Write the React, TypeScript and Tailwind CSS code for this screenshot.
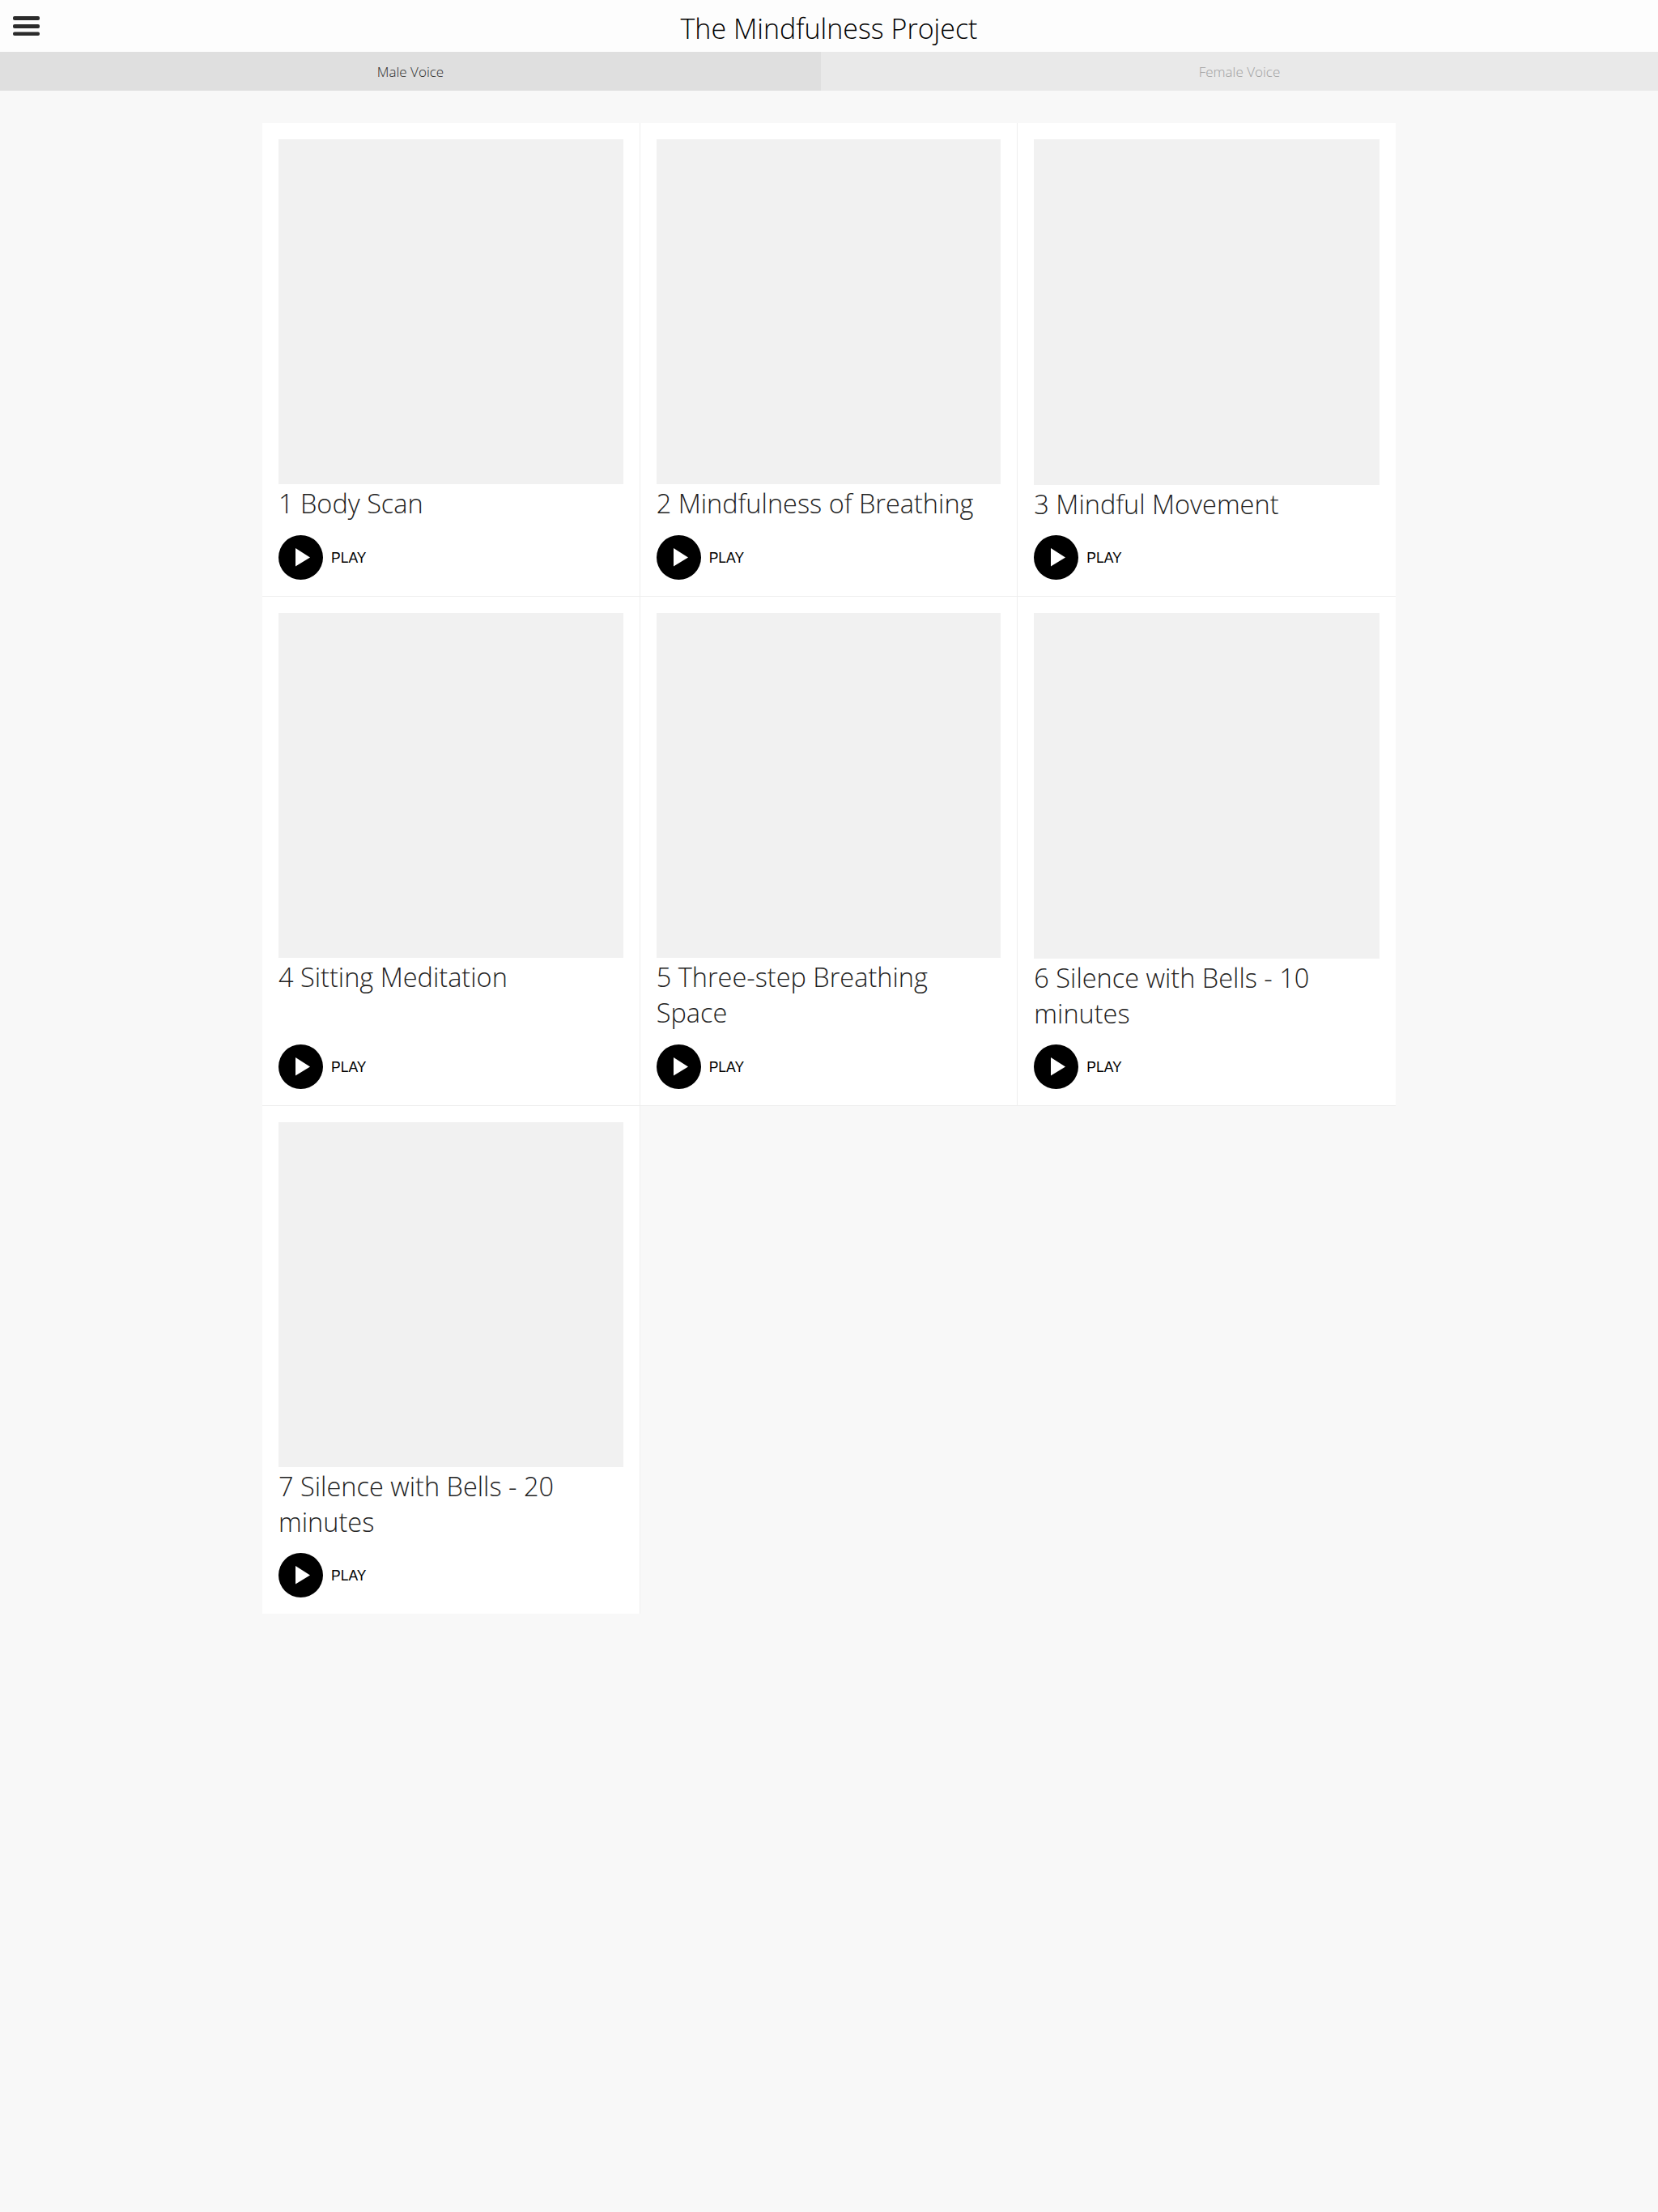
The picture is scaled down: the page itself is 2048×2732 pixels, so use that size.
const tracks = [
  "1 Body Scan",
  "2 Mindfulness of Breathing",
  "3 Mindful Movement",
  "4 Sitting Meditation",
  "5 Three-step Breathing Space",
  "6 Silence with Bells - 10 minutes",
  "7 Silence with Bells - 20 minutes",
];

const App = () => {
  return (
    <div className="min-h-screen bg-[#f8f8f8] font-['Open_Sans',sans-serif]">
      {/* Top bar */}
      <header className="h-16 bg-[#fdfdfd] grid grid-cols-[1fr_auto_1fr] items-center">
        <button className="w-[33px] h-6 ml-[16px]">
          <svg viewBox="0 0 33 24" className="w-[33px] h-6 text-[#2b2b2b]">
            <rect x="0" y="0" width="33" height="5" rx="2" fill="currentColor" />
            <rect x="0" y="10" width="33" height="5" rx="2" fill="currentColor" />
            <rect x="0" y="19.5" width="33" height="4.5" rx="2" fill="currentColor" />
          </svg>
        </button>
        <h1 className="pt-[5px] text-[34px] leading-[44px] font-light text-black">The Mindfulness Project</h1>
      </header>

      {/* Voice tabs */}
      <div className="flex h-12">
        <div className="w-[1014px] pt-[2px] bg-[#dfdfdf] flex items-center justify-center text-[17px] font-light text-[#2b2b2b]">
          Male Voice
        </div>
        <div className="flex-1 pt-[2px] bg-[#e9e9e9] flex items-center justify-center text-[17px] font-light text-[#a0a0a0]">
          Female Voice
        </div>
      </div>

      {/* Track grid */}
      <div className="w-[1400px] mx-auto mt-10 grid grid-cols-3">
        {tracks.map((title, i) => (
          <div
            key={title}
            className={`bg-white p-5 flex flex-col border-[#eeeeee] ${i < 6 ? "border-b" : ""} ${i % 3 < 2 ? "border-r" : ""}`}
          >
            <div className="aspect-square bg-[#f1f1f1]" />
            <p className="mt-[2px] text-[32.5px] leading-[44.25px] font-light text-[#222222]">{title}</p>
            <div className="mt-auto pt-4 flex items-center gap-[10px]">
              <svg viewBox="0 0 55 55" className="w-[55px] h-[55px]">
                <circle cx="27.5" cy="27.5" r="27.5" fill="#000" />
                <polygon points="21,16 39,27.5 21,38.5" fill="#fff" />
              </svg>
              <span className="pt-[1px] font-['Liberation_Sans',sans-serif] text-[17.5px] text-black">PLAY</span>
            </div>
          </div>
        ))}
      </div>
    </div>
  );
};

export default App;
